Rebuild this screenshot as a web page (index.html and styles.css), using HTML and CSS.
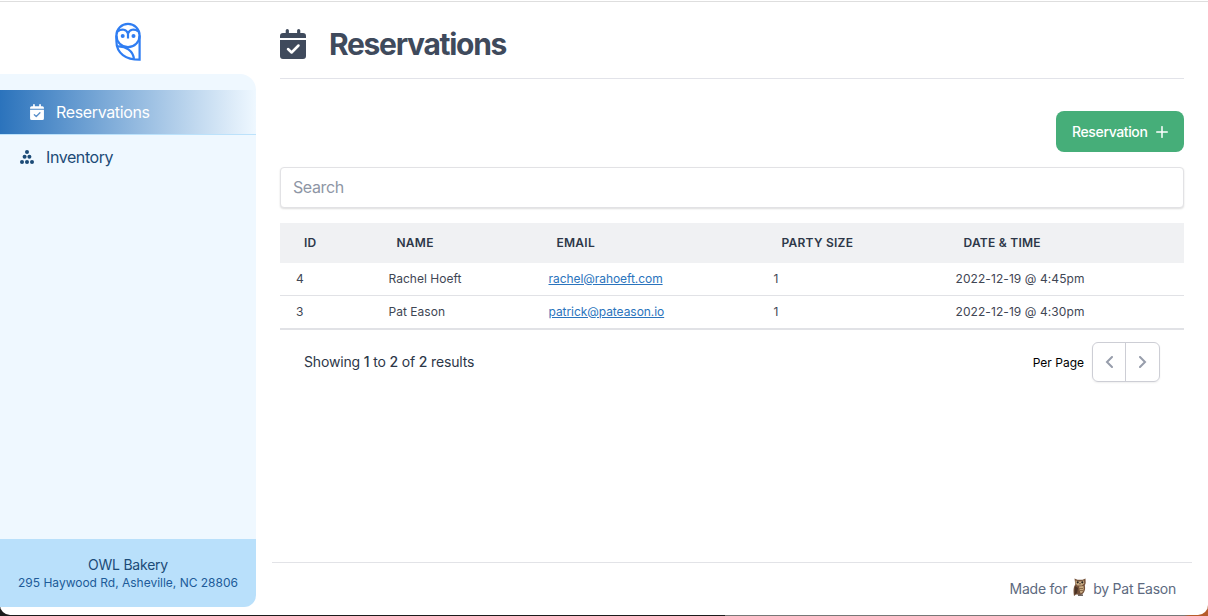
FILE: index.html
```html
<!DOCTYPE html>
<html lang="en">
<head>
<meta charset="utf-8">
<title>Reservations</title>
<link rel="stylesheet" href="styles.css">
</head>
<body>
<svg class="defs" aria-hidden="true">
  <symbol id="calendar" viewBox="0 0 26 30">
    <path fill="currentColor" d="M5.7 4V1.6a1.6 1.6 0 0 1 3.200 0V4h8.200V1.600a1.600 1.600 0 0 1 3.200 0V4H23a3 3 0 0 1 3 3v2H0V7a3 3 0 0 1 3-3zM0 11h26v16a3 3 0 0 1-3 3H3a3 3 0 0 1-3-3z"/>
    <path class="tick" d="M8 20l3.600 3.500 6.900-7"/>
  </symbol>
</svg>
<div class="window">
  <aside class="sidebar">
    <div class="brand">
      <svg class="logo" viewBox="0 0 28 40">
        <circle class="face" cx="14" cy="13.500" r="11.600"/>
        <path d="M25.600 13.500V37.700C12 37.700 2.400 31.500 2.400 19V13.500"/>
        <path d="M3.800 9.300c4-3 8.700-1.800 10.200 2.200 1.500-4 6.200-5.200 10.200-2.200M14 11v5.500M3.500 24.500c8-.5 15.500 4 16.500 12.500"/>
        <circle cx="8.700" cy="14" r="2"/><circle cx="19.500" cy="14" r="2"/>
      </svg>
    </div>
    <nav class="menu">
      <a class="item active"><svg class="item-icon"><use href="#calendar"/></svg><span>Reservations</span></a>
      <a class="item inventory"><svg class="boxes" viewBox="0 0 14 14"><circle cx="7" cy="2" r="2"/><circle cx="4.600" cy="6.800" r="2"/><circle cx="9.400" cy="6.800" r="2"/><circle cx="2" cy="12" r="2"/><circle cx="7" cy="12" r="2"/><circle cx="12" cy="12" r="2"/></svg><span>Inventory</span></a>
    </nav>
    <div class="shop"><div class="shop-name">OWL Bakery</div><div class="shop-address">295 Haywood Rd, Asheville, NC 28806</div></div>
  </aside>
  <main class="main">
    <header class="page-head"><svg class="head-icon"><use href="#calendar"/></svg><h1>Reservations</h1></header>
    <div class="actions"><button class="add"><span>Reservation</span><svg viewBox="0 0 12 12"><path d="M6 .7v10.600M.7 6h10.600"/></svg></button></div>
    <input class="search" type="text" placeholder="Search">
    <table class="table">
      <colgroup><col class="c-id"><col class="c-name"><col class="c-email"><col class="c-size"><col></colgroup>
      <thead><tr><th>ID</th><th>NAME</th><th>EMAIL</th><th>PARTY SIZE</th><th>DATE &amp; TIME</th></tr></thead>
      <tbody>
        <tr><td>4</td><td>Rachel Hoeft</td><td><a class="mail">rachel@rahoeft.com</a></td><td>1</td><td class="date">2022-12-19 @ 4:45pm</td></tr>
        <tr><td>3</td><td>Pat Eason</td><td><a class="mail">patrick@pateason.io</a></td><td>1</td><td class="date">2022-12-19 @ 4:30pm</td></tr>
      </tbody>
    </table>
    <div class="pagination">
      <p class="summary">Showing <b>1</b> to <b>2</b> of <b>2</b> results</p>
      <div class="pager"><span class="per-page">Per Page</span>
        <div class="pages"><button><svg viewBox="0 0 8 12"><path d="M7 1L2 6l5 5"/></svg></button><button><svg viewBox="0 0 8 12"><path d="M1 1l5 5-5 5"/></svg></button></div>
      </div>
    </div>
    <footer class="footer"><span>Made for</span>
      <svg class="owl" viewBox="0 0 14 19"><path fill="#76533b" d="M1.500.5l3 1.200h5l3-1.200.2 4.500-.9 2.500c1 4.500-.5 8-4 9.200L3 16.500 1 18C.2 12 .4 9 2.300 6.500z"/><path fill="#c9ac83" d="M2.500 2.500l4 1 4.500-1 .3 3-2.500 2H4.500l-2-2zM6 8.500l4.500-.5c.8 4-.5 6.500-3 7.500z"/><path fill="#4b3326" d="M2 8l3 2-1 5-2.500 1.500z"/><path stroke="#8b6a48" fill="none" d="M6 10.500h4M6 12.500h4"/><circle cx="4.700" cy="4.300" r="1.100" fill="#26201d"/><circle cx="9.300" cy="4.300" r="1.100" fill="#26201d"/><path fill="#423630" d="M6.300 5h1.400L7 7zM5 16.500h5v1.300H5z"/></svg>
      <span>by Pat Eason</span></footer>
  </main>
</div>
</body>
</html>
```
FILE: styles.css
```css
* { box-sizing: border-box; }
body {
  margin: 0;
  height: 616px;
  overflow: hidden;
  background: linear-gradient(90deg, #1b1b1b 0 60%, #777 60% 98%, #b65b2a 98.500%);
  font-family: Inter, "Liberation Sans", sans-serif;
  color: #2d3748;
}
.defs { display: none; }
.window {
  display: flex;
  height: 615px;
  border-top: 1px solid #fff;
  box-shadow: inset 0 1px #dedede;
  background: #fff;
  border-radius: 0 0 10px 10px;
}
.sidebar { width: 256px; height: 606px; display: flex; flex-direction: column; }
.brand { height: 73px; flex: none; display: flex; justify-content: center; padding-top: 21px; }
.logo { width: 28px; height: 40px; fill: none; stroke: #2f7df2; stroke-width: 2.200; }
.logo circle { fill: #2f7df2; stroke: none; }
.logo .face { fill: none; stroke: #2f7df2; }
.menu { flex: 1; background: #eff8ff; border-top-right-radius: 16px; padding-top: 16px; }
.item { display: flex; align-items: center; height: 45px; padding: 0 20px; gap: 12px; font-size: 16px; letter-spacing: -.36px; color: #1c4b77; }
.inventory { height: 43px; letter-spacing: -.42px; }
.active { padding-left: 30px; color: #fff; background: linear-gradient(90deg, #2b73bc, #eff8ff); border-bottom: 1px solid #bce2fb; }
.item-icon { width: 14px; height: 16px; }
.boxes { width: 14px; height: 14px; fill: currentColor; }
.active .item-icon { --tick: #5b91cb; }
.tick { fill: none; stroke: var(--tick, #fff); stroke-width: 2.500; stroke-linecap: round; stroke-linejoin: round; }
.shop { height: 68px; flex: none; background: #b9e0fb; border-bottom-right-radius: 12px; padding-top: 16px; text-align: center; }
.shop-name { font-size: 14px; line-height: 20px; color: #1c4b77; letter-spacing: -.22px; }
.shop-address { font-size: 12px; line-height: 16px; color: #205b99; letter-spacing: -.01px; }
.main { flex: 1; display: flex; flex-direction: column; padding: 0 24px; }
.page-head { height: 78px; flex: none; display: flex; align-items: center; padding-top: 9px; gap: 23px; border-bottom: 1px solid #e2e3e9; color: #3f4a5c; }
.head-icon { width: 26px; height: 30px; }
.page-head h1 { margin: 0; font-size: 30px; line-height: 36px; font-weight: 700; letter-spacing: -1.300px; }
.actions { display: flex; justify-content: flex-end; margin-top: 32px; }
.add { display: flex; align-items: center; justify-content: space-between; width: 128px; height: 41px; padding: 0 16px; border: 0; border-radius: 8px; background: #46ae79; color: #fff; font: 500 14px Inter, sans-serif; letter-spacing: -.37px; }
.add svg { width: 12px; height: 12px; stroke: currentColor; stroke-width: 1.500; stroke-linecap: round; }
.search { height: 41px; margin-top: 15px; padding: 0 12px 2px; border: 1px solid #e2e2e5; border-radius: 4px; box-shadow: 0 1px 2px #0002; background: #fff; font: 16px Inter, sans-serif; letter-spacing: -.4px; }
.search::placeholder { color: #8e96a5; }
.table { width: 100%; margin-top: 15px; table-layout: fixed; border-collapse: separate; border-spacing: 0; font-size: 12px; }
.c-id { width: 92.500px; }
.c-name { width: 160px; }
.c-email { width: 225px; }
.c-size { width: 182px; }
.table th { height: 40px; padding: 0 24px 2px; background: #f0f1f3; text-align: left; font-weight: 600; letter-spacing: .25px; }
.table td { height: 33px; padding: 0 16px 2px; border-bottom: 1px solid #e1e2e6; color: #3f4654; letter-spacing: .03px; }
.table td.date { letter-spacing: .08px; }
.table tr:last-child td { height: 34px; border-bottom-width: 2px; }
.mail { color: #2b74bd; text-decoration: underline; letter-spacing: -.06px; }
.pagination { display: flex; justify-content: space-between; align-items: center; height: 40px; margin-top: 12px; padding: 0 24px; }
.summary { margin: 0; padding-bottom: 2px; font-size: 14px; letter-spacing: -.16px; }
.summary b { font-weight: 500; }
.pager { display: flex; align-items: center; gap: 8px; }
.per-page { font-size: 12px; color: #000; }
.pages { display: flex; width: 68px; height: 40px; border: 1px solid #cdced5; border-radius: 6px; box-shadow: 0 1px 2px #0001; }
.pages button { width: 32px; padding: 0; border: 0; background: none; display: flex; align-items: center; justify-content: center; }
.pages button + button { width: 34px; border-left: 1px solid #cdced5; }
.pages svg { width: 8px; height: 12px; fill: none; stroke: #979dab; stroke-width: 2; stroke-linecap: round; }
.footer { display: flex; align-items: center; justify-content: flex-end; gap: 6px; height: 53px; margin: auto -8px 0; padding: 0 16px 2px; border-top: 1px solid #e2e3e7; color: #5d6a80; font-size: 14px; letter-spacing: -.25px; }
.owl { width: 14px; height: 19px; margin-bottom: 1px; }
```
